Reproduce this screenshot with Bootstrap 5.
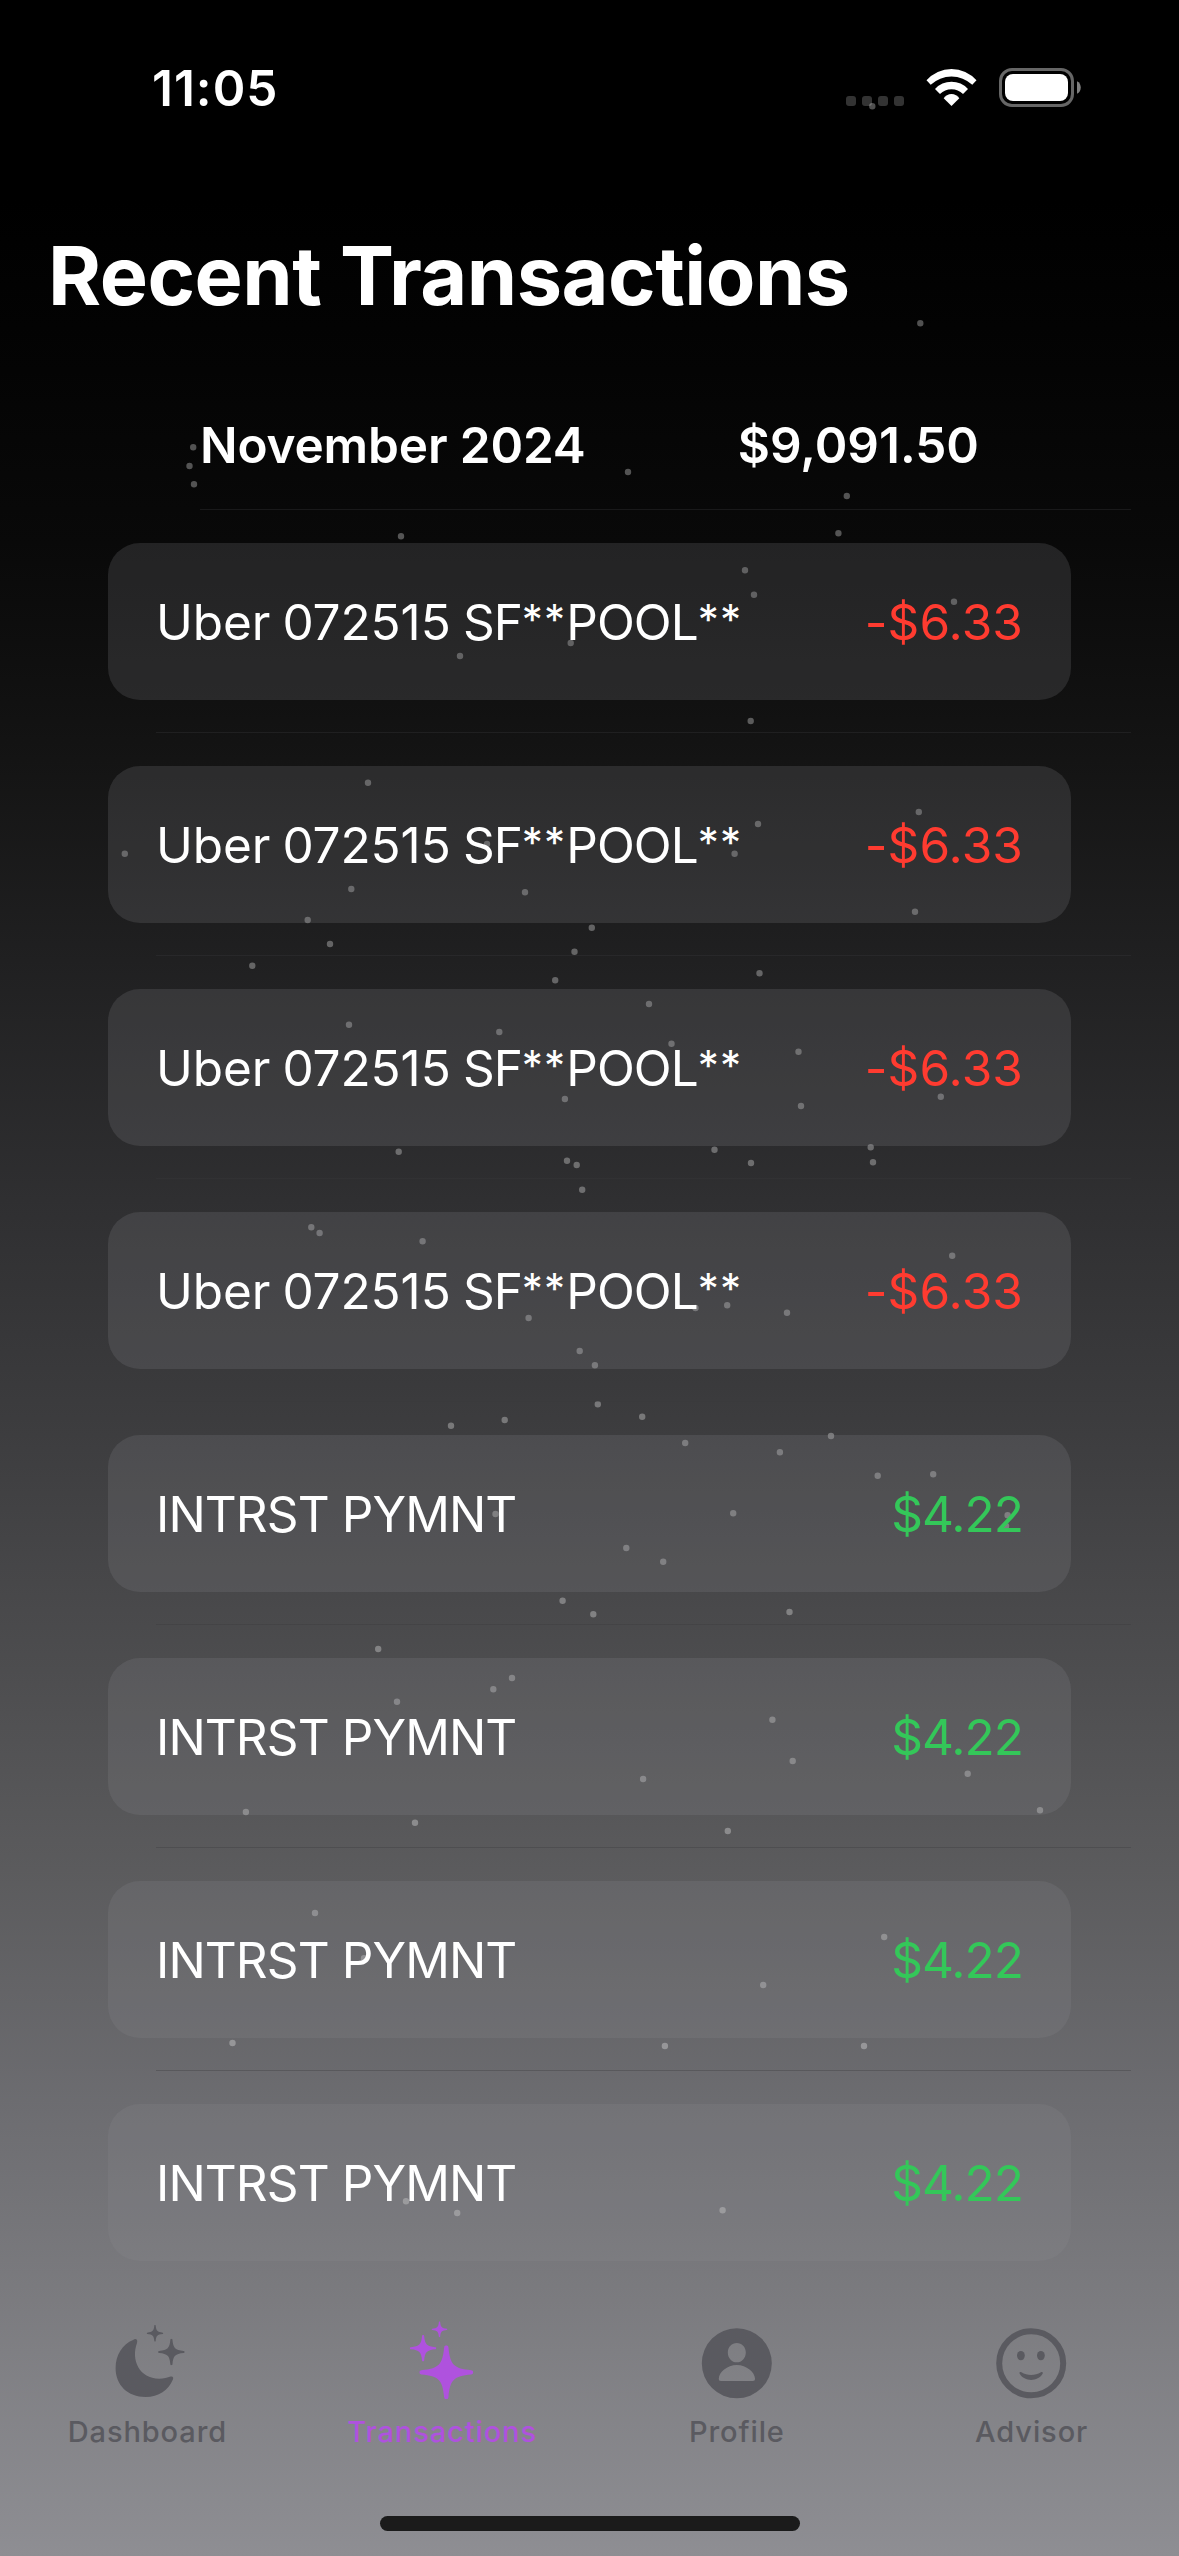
<!DOCTYPE html>
<html lang="en">
<head>
<meta charset="utf-8">
<meta name="viewport" content="width=device-width, initial-scale=1">
<title>Recent Transactions</title>
<link href="https://cdn.jsdelivr.net/npm/bootstrap@5.3.0/dist/css/bootstrap.min.css" rel="stylesheet">
<style>
  body { margin: 0; background: #000; font-family: Inter, Roboto, "Liberation Sans", sans-serif; color: #fff; }
  .screen {
    width: 1179px; height: 2556px;
    background: linear-gradient(180deg, #000 0, #000 200px, #040404 370px, #090909 543px, #141414 760px, #202021 960px, #2f2f31 1200px, #3d3d3f 1435px, #4d4d4f 1670px, #5b5b5d 1870px, #6c6c70 2100px, #7b7b7f 2300px, #8e8e93 2556px);
  }
  .starfield { top: 0; left: 0; pointer-events: none; }
  .layer { z-index: 1; }
  .statusbar { height: 216px; padding: 68px 98px 0 152px; }
  .clock { font-size: 49.5px; font-weight: 600; line-height: 40px; letter-spacing: 1px; }
  .page-title { height: 132px; padding-left: 48px; font-size: 81px; font-weight: 700; line-height: 120px; letter-spacing: -.52px; margin: 0; }
  .list-area { padding-left: 108px; }
  .month { height: 161px; padding: 67px 200px 0 92px; font-size: 49.5px; font-weight: 600; line-height: 60px; letter-spacing: -.15px; }
  .month-sum { letter-spacing: 0; }
  .rule { height: 1px; background: rgba(56,56,60,.35); margin-right: 48px; }
  .rule-month { margin-left: 92px; margin-bottom: 33px; }
  .rule-row { margin-left: 48px; margin-top: 32px; margin-bottom: 33px; }
  .txn { width: 963px; height: 157px; padding: 0 48px; border: 0; border-radius: 32px; background: rgba(142,142,147,.2); color: #fff; font-size: 49.5px; line-height: 60px; }
  .payee { word-spacing: -1.6px; letter-spacing: -.1px; }
  .caps { letter-spacing: -1px; }
  .stars { font-size: 42px; line-height: 1; vertical-align: 5px; letter-spacing: 1.2px; }
  .payer { letter-spacing: -.9px; }
  .debit { color: #ff3b30; letter-spacing: .1px; }
  .credit { color: #34c759; letter-spacing: -1px; }
  .tabs { height: 207px; margin-top: 48px; }
  .tab-item { flex: 1 1 0; color: #5a5a60; font-size: 29px; font-weight: 500; line-height: 36px; letter-spacing: .9px; }
  .tab-item svg { display: block; margin-top: 1px; margin-bottom: 9px; }
  .tab-on { color: #af52de; }
  .home-bar { width: 420px; height: 15px; border-radius: 8px; background: #1b1b1b; }
</style>
</head>
<body>
<svg width="0" height="0" class="position-absolute">
  <symbol id="spark" viewBox="-100 -100 200 200"><path fill="currentColor" d="M0-100C6-100 7-96 8-92C14-28 28-14 92-8C96-7 100-6 100 0C100 6 96 7 92 8C28 14 14 28 8 92C7 96 6 100 0 100C-6 100-7 96-8 92C-14 28-28 14-92 8C-96 7-100 6-100 0C-100-6-96-7-92-8C-28-14-14-28-8-92C-7-96-6-100 0-100Z"/></symbol>
</svg>
<div class="screen position-relative overflow-hidden">
  <svg class="starfield position-absolute" width="1179" height="2556" fill="none" stroke="#fff" stroke-opacity=".31" stroke-width="6.4" stroke-linecap="round">
    <path d="M872.3 106.3h.01M920.3 323.3h.01M193.2 447.3h.01M189.5 466h.01M194 484.3h.01M518 450h.01M628 472h.01M846.8 496h.01M401 536.3h.01M838.4 533.3h.01M745 570.3h.01M754 594.7h.01M954 601.7h.01M570.7 643h.01M460 656h.01M750.7 721h.01"/>
    <path d="M368 782.7h.01M918.8 812h.01M758 824h.01M734.6 853.7h.01M124.8 853.7h.01M487 844h.01M351.3 889h.01M525 892.3h.01M307.700 920h.01M915 911.7h.01M591.8 927.7h.01M330 944h.01M574.5 951.7h.01M252.300 965.7h.01M759.5 973.3h.01M555.200 980.3h.01M649 1004h.01M349 1024.7h.01M499.3 1032h.01M671.5 1043.7h.01M798.5 1051.7h.01M564.9 1099h.01M801 1106h.01M940.8 1096.7h.01M398.7 1151.7h.01M714.5 1149.7h.01M870.7 1147.3h.01M567 1160.7h.01M576.7 1165h.01M751 1163h.01M873 1162.3h.01M582.2 1189.7h.01"/>
    <path d="M311.3 1227.3h.01M319.6 1233h.01M422.6 1241.3h.01M952.2 1255.7h.01M727.2 1305.3h.01M695.5 1308h.01M787 1312.7h.01M528.6 1318h.01M579.7 1351h.01M594.9 1365.3h.01M597.8 1404.3h.01M642.2 1416.7h.01M504.7 1420h.01M451 1425.7h.01M831 1436h.01M685.2 1443h.01M779.9 1452.3h.01M877.7 1475.7h.01M933.2 1474.3h.01M733.2 1513.3h.01M495.5 1514h.01M1007.6 1515.3h.01M1006 1526h.01M626.3 1548h.01M663.2 1561.7h.01M562.6 1600.7h.01M593.3 1614.3h.01M789.5 1612h.01M378.2 1649h.01"/>
    <path d="M512 1678h.01M493.3 1689.3h.01M397 1701.7h.01M772.4 1719.7h.01M792.7 1761h.01M967.7 1773.7h.01M643.1 1779h.01M245.9 1812h.01M1040 1810.3h.01M415 1822.7h.01M727.8 1831h.01M315 1913h.01M884.2 1937h.01M364 1958.3h.01M763.2 1985h.01M232.5 2043h.01M664.9 2046h.01M864 2046h.01M406 2201.3h.01M457.2 2213h.01M722.6 2210.3h.01"/>
  </svg>

  <div class="layer position-relative d-flex flex-column h-100">
    <header class="statusbar d-flex justify-content-between align-items-start">
      <div class="clock">11:05</div>
      <svg width="235" height="40" viewBox="846 68 235 40">
        <g fill="#fff" fill-opacity=".2"><rect x="846" y="96" width="10" height="10" rx="3"/><rect x="862" y="96" width="10" height="10" rx="3"/><rect x="878" y="96" width="10" height="10" rx="3"/><rect x="894" y="96" width="10" height="10" rx="3"/></g>
        <g transform="translate(926 69)" fill="#fff">
          <path d="M.5 11.3A33.3 33.3 0 0 1 50.5 11.3L46.3 15.7A30.5 30.5 0 0 0 4.7 15.7Z"/>
          <path d="M9 20A22.3 22.3 0 0 1 42 20L37 25A16.4 16.4 0 0 0 14 25Z"/>
          <path d="M17.7 29.3A9.2 9.2 0 0 1 33.3 29.3L25.5 37Z"/>
        </g>
        <rect x="1000.5" y="69.5" width="72" height="36" rx="11.5" fill="none" stroke="#fff" stroke-opacity=".4" stroke-width="3"/>
        <rect x="1005" y="74" width="63" height="27" rx="8" fill="#fff"/>
        <path d="M1077 81.2C1082 83.500 1082 91.500 1077 93.800Z" fill="#fff" fill-opacity=".5"/>
      </svg>
    </header>

    <h1 class="page-title">Recent Transactions</h1>

    <main class="list-area">
      <div class="month d-flex justify-content-between"><span>November 2024</span><span class="month-sum">$9,091.50</span></div>
      <div class="rule rule-month"></div>
      <div class="txn card flex-row align-items-center justify-content-between"><span class="payee">Uber 072515 <span class="caps">SF</span><span class="stars">**</span><span class="caps">POOL</span><span class="stars">**</span></span><span class="debit">-$6.33</span></div>
      <div class="rule rule-row"></div>
      <div class="txn card flex-row align-items-center justify-content-between"><span class="payee">Uber 072515 <span class="caps">SF</span><span class="stars">**</span><span class="caps">POOL</span><span class="stars">**</span></span><span class="debit">-$6.33</span></div>
      <div class="rule rule-row"></div>
      <div class="txn card flex-row align-items-center justify-content-between"><span class="payee">Uber 072515 <span class="caps">SF</span><span class="stars">**</span><span class="caps">POOL</span><span class="stars">**</span></span><span class="debit">-$6.33</span></div>
      <div class="rule rule-row"></div>
      <div class="txn card flex-row align-items-center justify-content-between"><span class="payee">Uber 072515 <span class="caps">SF</span><span class="stars">**</span><span class="caps">POOL</span><span class="stars">**</span></span><span class="debit">-$6.33</span></div>
      <div class="rule rule-row"></div>
      <div class="txn card flex-row align-items-center justify-content-between"><span class="payer">INTRST PYMNT</span><span class="credit">$4.22</span></div>
      <div class="rule rule-row"></div>
      <div class="txn card flex-row align-items-center justify-content-between"><span class="payer">INTRST PYMNT</span><span class="credit">$4.22</span></div>
      <div class="rule rule-row"></div>
      <div class="txn card flex-row align-items-center justify-content-between"><span class="payer">INTRST PYMNT</span><span class="credit">$4.22</span></div>
      <div class="rule rule-row"></div>
      <div class="txn card flex-row align-items-center justify-content-between"><span class="payer">INTRST PYMNT</span><span class="credit">$4.22</span></div>
    </main>

    <nav class="tabs d-flex">
      <div class="tab-item d-flex flex-column align-items-center">
        <svg width="100" height="95" viewBox="97.400 2310 100 95"><g transform="translate(100 2310)"><path fill="currentColor" d="M33.500 30C36 28 38.500 29.500 37.400 33C31 50 40 68.700 59.600 68.700C64 68.700 68 67.500 71 66.500C73.500 66 74 67.500 73.300 69.500C69 80 59 87 46 87C28 87 16 75 16 58C16 45 23 34 33.500 30Z"/><use href="#spark" x="47" y="14.900" width="16.800" height="16.800"/><use href="#spark" x="58.500" y="28.700" width="26.600" height="26.600"/></g></svg>
        <span class="tab-label">Dashboard</span>
      </div>
      <div class="tab-item tab-on d-flex flex-column align-items-center">
        <svg width="100" height="95" viewBox="392.100 2310 100 95"><use href="#spark" x="431.600" y="2321.300" width="16" height="16"/><use href="#spark" x="409.900" y="2335" width="26.600" height="26.600"/><use href="#spark" x="419.400" y="2345.300" width="54" height="54"/></svg>
        <span class="tab-label">Transactions</span>
      </div>
      <div class="tab-item d-flex flex-column align-items-center">
        <svg width="100" height="95" viewBox="686.900 2310 100 95"><path fill="currentColor" fill-rule="evenodd" d="M736.700 2328.300a35 35 0 0 1 0 70a35 35 0 0 1 0-70ZM736.700 2343C741.700 2343 745.700 2347 745.700 2352.400C745.700 2358 741.700 2362.300 736.700 2362.300C731.700 2362.300 727.700 2358 727.700 2352.400C727.700 2347 731.700 2343 736.700 2343ZM736.700 2365C746.500 2365 754.800 2372.500 754.900 2378.500C754.900 2380.300 754.300 2381 752.800 2381H720.800C719.300 2381 718.700 2380.300 718.700 2378.500C718.800 2372.500 727 2365 736.700 2365Z"/></svg>
        <span class="tab-label">Profile</span>
      </div>
      <div class="tab-item d-flex flex-column align-items-center">
        <svg width="100" height="95" viewBox="981.600 2310 100 95"><circle cx="1030.800" cy="2363.300" r="32" fill="none" stroke="currentColor" stroke-width="6"/><ellipse cx="1020.500" cy="2355.600" rx="3.900" ry="4.700" fill="currentColor"/><ellipse cx="1040.500" cy="2355.600" rx="3.900" ry="4.700" fill="currentColor"/><path fill="currentColor" d="M1021 2372.300C1027 2376 1034.500 2376 1040.500 2372.300C1042 2371.500 1043 2372.500 1042.200 2373.800C1037.500 2382 1024 2382 1019.300 2373.800C1018.500 2372.500 1019.500 2371.500 1021 2372.300Z"/></svg>
        <span class="tab-label">Advisor</span>
      </div>
    </nav>
    <div class="home-bar mx-auto"></div>
  </div>
</div>
<script src="https://cdn.jsdelivr.net/npm/bootstrap@5.3.0/dist/js/bootstrap.bundle.min.js"></script>
</body>
</html>
